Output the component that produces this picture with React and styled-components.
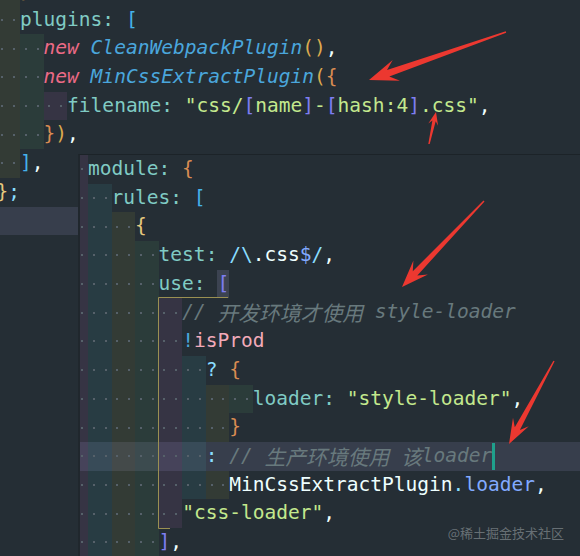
import React from 'react'
import styled, { createGlobalStyle, css } from 'styled-components'

const CH = 11.77
const LH = 28.7

// token colours
const K = '#80cbc4'
const W = '#eeffff'
const B = '#45b2ea'
const P = '#7f7ef2'
const S = '#c3e88d'
const CY = '#89ddff'
const BL = '#82aaff'
const OR = '#d98c52'
const GOLD = '#dcaa4e'
const Y = '#e6c97e'
const NEW = '#ec6a86'
const CLS = '#4aa6dc'
const CM = '#68797d'
const PINK = '#f2aab9'

const RAINBOW = [
  'rgba(255, 255, 64, 0.065)',
  'rgba(127, 255, 127, 0.07)',
  'rgba(255, 127, 255, 0.08)',
  'rgba(79, 236, 236, 0.075)',
]

const GlobalStyle = createGlobalStyle`
  html, body {
    margin: 0;
    padding: 0;
    background: #252e35;
  }
`

const Screen = styled.div`
  position: relative;
  width: 580px;
  height: 556px;
  overflow: hidden;
  background: #252e35;
  font-family: "DejaVu Sans Mono", "Liberation Mono", monospace;
  font-size: 19.55px;
  color: ${W};
`

const Editor = styled.div`
  display: flex;
  flex-direction: column;
  margin: ${p => p.$top}px 0 0 ${p => p.$left}px;
`

const FloatPane = styled.div`
  position: absolute;
  left: 78px;
  top: 154px;
  right: 0;
  bottom: 0;
  background: #252e35;
  border-top: 1px solid #1c2328;
  border-left: 2px solid #20272d;
  overflow: hidden;
`

const Row = styled.div`
  display: flex;
  align-items: stretch;
  height: ${LH}px;
  line-height: ${LH}px;
  white-space: pre;
  background: ${p => (p.$current ? '#373e4c' : 'transparent')};
`

const Indent = styled.span`
  display: inline-flex;
  width: ${2 * CH}px;
  flex: none;
  background: ${p => RAINBOW[p.$level % 4]};
`

const Dot = styled.span`
  display: flex;
  align-items: center;
  justify-content: center;
  width: ${CH}px;

  &::before {
    content: '';
    width: 2px;
    height: 2px;
    background: #56616a;
  }
`

const Tok = styled.span`
  color: ${p => p.$c};
  font-style: ${p => (p.$i ? 'italic' : 'normal')};
  ${p => p.$box && css`
    background: #3c4351;
  `}
`

const Cjk = styled.span`
  font-family: "Noto Sans CJK SC", sans-serif;
  font-size: 20.8px;
  font-style: italic;
  color: ${CM};
`

const Cursor = styled.span`
  width: 2.5px;
  margin: 1px 0;
  background: #1fa08c;
`

const Overlay = styled.svg`
  position: absolute;
  left: 0;
  top: 0;
  pointer-events: none;
`

const Arrow = styled.polygon`
  fill: #ec3830;
`

const Guide = styled.path`
  fill: none;
  stroke: #9a9052;
  stroke-width: 1;
`

const Watermark = styled.div`
  position: absolute;
  right: 16px;
  bottom: 14px;
  font-family: "Noto Sans CJK SC", "Noto Sans", sans-serif;
  font-size: 13px;
  color: rgba(200, 206, 210, 0.42);
`

const cjk = text => ({ cjk: text })

const leftRows = [
  { ind: 2, toks: [['}', GOLD], [',', W]] },
  { ind: 2, toks: [['plugins: ', K], ['[', B]] },
  { ind: 4, toks: [['new ', NEW, 1], ['CleanWebpackPlugin', CLS, 1], ['()', GOLD], [',', W]] },
  { ind: 4, toks: [['new ', NEW, 1], ['MinCssExtractPlugin', CLS, 1], ['(', GOLD], ['{', OR]] },
  {
    ind: 6,
    toks: [
      ['filename: ', K], ['"css/', S], ['[', P], ['name', S], [']', P], ['-', S],
      ['[', P], ['hash:4', S], [']', P], ['.css"', S], [',', W],
    ],
  },
  { ind: 4, toks: [['}', OR], [')', GOLD], [',', W]] },
  { ind: 2, toks: [[']', B], [',', W]] },
  { ind: 0, toks: [['}', Y], [';', CY]] },
  { ind: 0, toks: [], current: true },
]

const rightRows = [
  { ind: 6, toks: [['module: ', K], ['{', OR]] },
  { ind: 8, toks: [['rules: ', K], ['[', B]] },
  { ind: 10, toks: [['{', Y]] },
  { ind: 12, toks: [['test: ', K], ['/\\', CY], ['.css', W], ['$', BL], ['/', CY], [',', W]] },
  { ind: 12, toks: [['use: ', K], ['[', P, 0, 1]] },
  { ind: 14, toks: [['// ', CM, 1], cjk('开发环境才使用'), [' style-loader', CM, 1]] },
  { ind: 14, toks: [['!', CLS], ['isProd', PINK]] },
  { ind: 16, toks: [['? ', CY], ['{', OR]] },
  { ind: 20, toks: [['loader: ', K], ['"style-loader"', S], [',', W]] },
  { ind: 18, toks: [['}', OR]] },
  {
    ind: 16,
    current: true,
    cursor: true,
    toks: [[': ', CY], ['// ', CM, 1], cjk('生产环境使用'), [' ', CM], cjk('该'), ['loader', CM, 1]],
  },
  { ind: 18, toks: [['MinCssExtractPlugin', W], ['.', CY], ['loader', BL], [',', W]] },
  { ind: 14, toks: [['"css-loader"', S], [',', W]] },
  { ind: 12, toks: [[']', P], [',', W]] },
]

function CodeLine({ row }) {
  const levels = Array.from({ length: row.ind / 2 }, (_, i) => i)
  return (
    <Row $current={row.current}>
      {levels.map(l => (
        <Indent key={l} $level={l}>
          <Dot />
          <Dot />
        </Indent>
      ))}
      {row.toks.map((t, i) =>
        t.cjk ? (
          <Cjk key={i}>{t.cjk}</Cjk>
        ) : (
          <Tok key={i} $c={t[1]} $i={t[2]} $box={t[3]}>
            {t[0]}
          </Tok>
        )
      )}
      {row.cursor && <Cursor />}
    </Row>
  )
}

// tapered screenshot-tool arrow, from tail to tip
function arrowPoints([x1, y1], [x2, y2], head, half, neck) {
  const len = Math.hypot(x2 - x1, y2 - y1)
  const ux = (x2 - x1) / len
  const uy = (y2 - y1) / len
  const nx = -uy
  const ny = ux
  const bx = x2 - ux * head
  const by = y2 - uy * head
  const kx = x2 - ux * head * 0.7
  const ky = y2 - uy * head * 0.7
  const pts = [
    [x1 + nx * 0.7, y1 + ny * 0.7],
    [kx + nx * neck, ky + ny * neck],
    [bx + nx * half, by + ny * half],
    [x2, y2],
    [bx - nx * half, by - ny * half],
    [kx - nx * neck, ky - ny * neck],
    [x1 - nx * 0.7, y1 - ny * 0.7],
  ]
  return pts.map(p => p.map(v => v.toFixed(1)).join(',')).join(' ')
}

const arrows = [
  { from: [506, 32], to: [369, 80], head: 29, half: 11, neck: 3.4 },
  { from: [429, 144], to: [436, 112], head: 13, half: 5, neck: 1.7 },
  { from: [484, 201], to: [402, 287], head: 27, half: 10, neck: 3.1 },
  { from: [554, 361], to: [509, 444], head: 25, half: 9, neck: 2.9 },
]

export default function App() {
  return (
    <>
      <GlobalStyle />
      <Screen>
        <Editor $top={-23} $left={-3.5}>
          {leftRows.map((r, i) => (
            <CodeLine key={i} row={r} />
          ))}
        </Editor>

        <FloatPane>
          <Editor $top={0} $left={-62.6}>
            {rightRows.map((r, i) => (
              <CodeLine key={i} row={r} />
            ))}
          </Editor>
        </FloatPane>

        <Overlay width="580" height="556" viewBox="0 0 580 556">
          <Guide d="M228 297.5 H158.5 V528.5 H170" />
          {arrows.map((a, i) => (
            <Arrow key={i} points={arrowPoints(a.from, a.to, a.head, a.half, a.neck)} />
          ))}
        </Overlay>

        <Watermark>@稀土掘金技术社区</Watermark>
      </Screen>
    </>
  )
}
